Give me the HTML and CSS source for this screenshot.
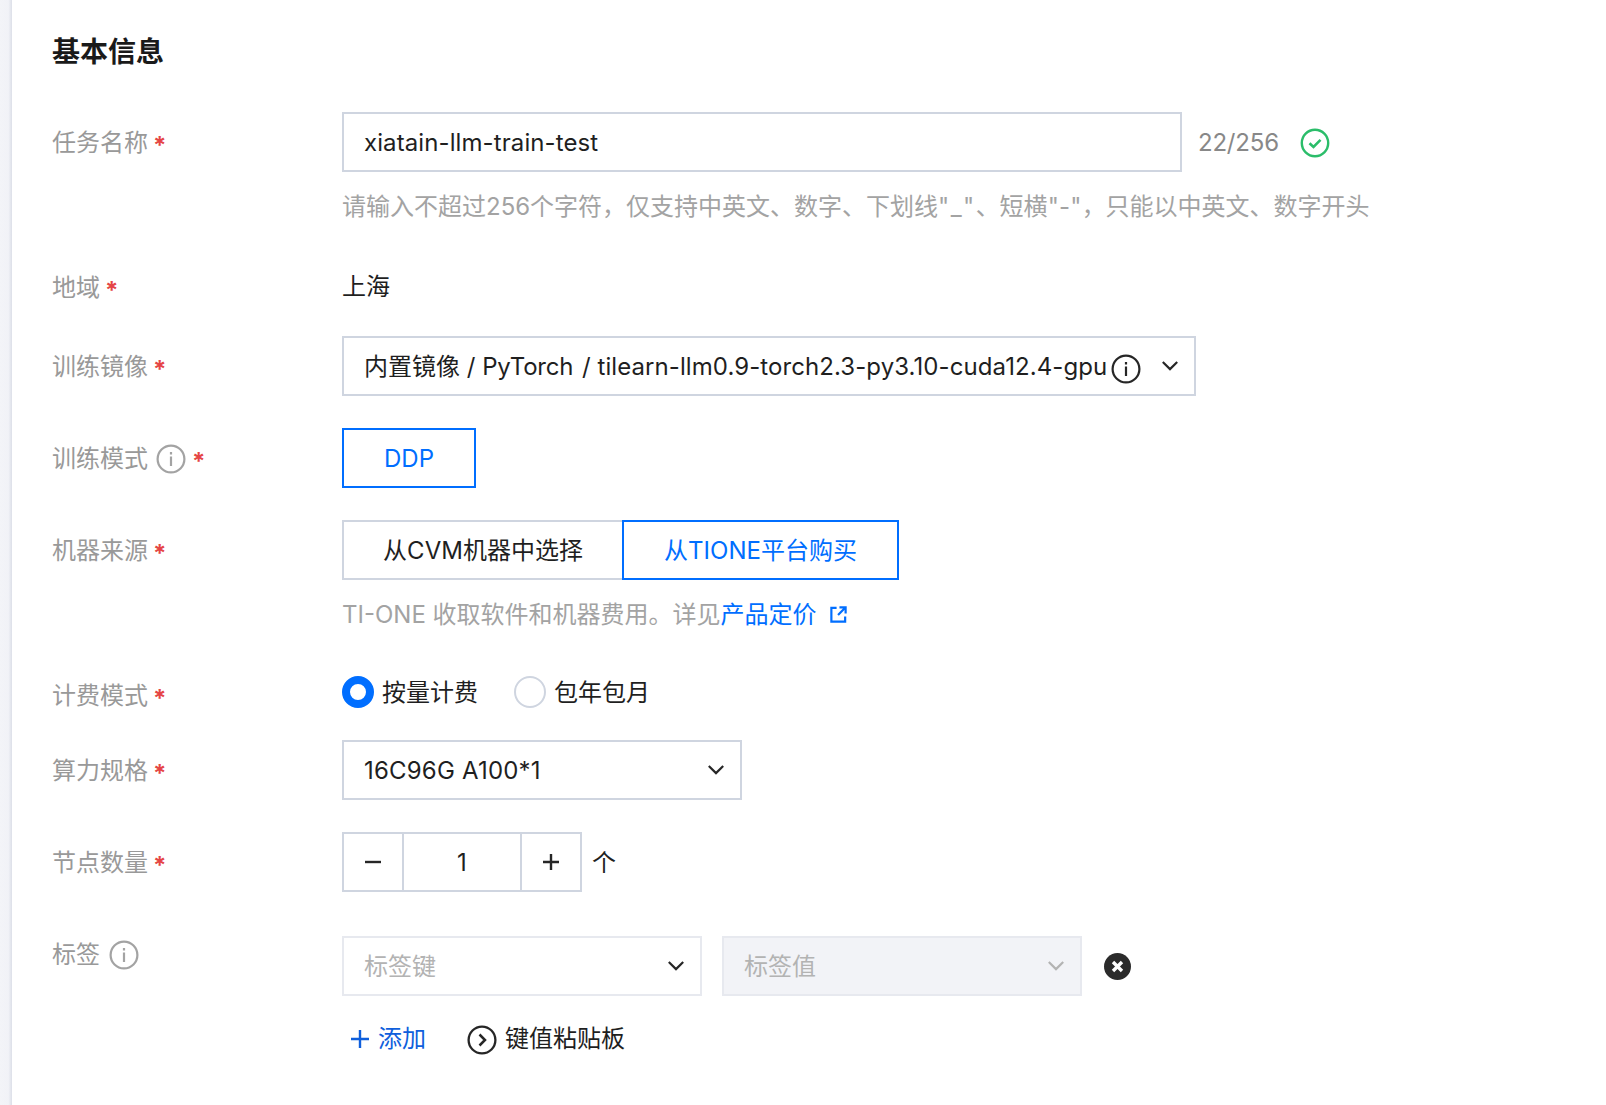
FILE: index.html
```html
<!DOCTYPE html>
<html lang="zh">
<head>
<meta charset="utf-8">
<title>基本信息</title>
<link rel="stylesheet" href="styles.css">
</head>
<body>
<div class="edge"></div>
<main class="panel">
  <h2 class="title">基本信息</h2>

  <div class="row row-name">
    <div class="label">任务名称<span class="req">*</span></div>
    <div class="ctrl">
      <div class="line">
        <div class="box box-name">xiatain-llm-train-test</div>
        <span class="count">22/256</span>
        <svg class="ok" viewBox="0 0 30 30"><circle cx="15" cy="15" r="13.2" fill="none" stroke="#2bbd6a" stroke-width="2.4"/><path d="M9.5 15.2l4 3.8 7-7.2" fill="none" stroke="#2bbd6a" stroke-width="2.6"/></svg>
      </div>
      <p class="hint">请输入不超过256个字符，仅支持中英文、数字、下划线<span class="q1">"_"</span>、短横<span class="q2">"-"</span>，只能以中英文、数字开头</p>
    </div>
  </div>

  <div class="row row-region">
    <div class="label label-plain">地域<span class="req">*</span></div>
    <div class="ctrl plain">上海</div>
  </div>

  <div class="row row-image">
    <div class="label">训练镜像<span class="req">*</span></div>
    <div class="ctrl">
      <div class="box box-image">
        <span>内置镜像 / <span class="torch">PyTorch</span> <span class="slash">/</span> <span class="tail">tilearn-llm0.9-torch2.3-py3.10-cuda12.4-gpu</span></span>
        <svg class="info info-dark" viewBox="0 0 30 30"><circle cx="15" cy="15" r="13.4" fill="none" stroke="currentColor" stroke-width="2.2"/><path d="M15 12.5v9.5M15 8v2.6" fill="none" stroke="currentColor" stroke-width="2.2"/></svg>
        <svg class="chev" viewBox="0 0 20 12"><path d="M2 2l8 8 8-8" fill="none" stroke="currentColor" stroke-width="2.4"/></svg>
      </div>
    </div>
  </div>

  <div class="row row-tight">
    <div class="label">训练模式<svg class="info info-grey" viewBox="0 0 30 30"><circle cx="15" cy="15" r="13.4" fill="none" stroke="currentColor" stroke-width="2.2"/><path d="M15 12.5v9.5M15 8v2.6" fill="none" stroke="currentColor" stroke-width="2.2"/></svg><span class="req req-mode">*</span></div>
    <div class="ctrl"><div class="seg seg-on seg-ddp">DDP</div></div>
  </div>

  <div class="row row-tight">
    <div class="label">机器来源<span class="req">*</span></div>
    <div class="ctrl">
      <div class="segs">
        <div class="seg seg-cvm">从CVM机器中选择</div>
        <div class="seg seg-on seg-tione">从TIONE平台购买</div>
      </div>
      <p class="hint">TI-ONE 收取软件和机器费用。详见<a class="link">产品定价<svg class="ext" viewBox="0 0 20 20"><path d="M8 3H2.5v14.500h14.500V12M11 2.500h6.500V9M17 3l-7.500 7.500" fill="none" stroke="currentColor" stroke-width="2.300"/></svg></a></p>
    </div>
  </div>

  <div class="row row-bill">
    <div class="label label-low">计费模式<span class="req">*</span></div>
    <div class="ctrl radios">
      <span class="radio"><i class="dot dot-on"></i>按量计费</span>
      <span class="radio"><i class="dot"></i>包年包月</span>
    </div>
  </div>

  <div class="row row-spec">
    <div class="label">算力规格<span class="req">*</span></div>
    <div class="ctrl">
      <div class="box box-spec"><span>16C96G A100*1</span><svg class="chev" viewBox="0 0 20 12"><path d="M2 2l8 8 8-8" fill="none" stroke="currentColor" stroke-width="2.4"/></svg></div>
    </div>
  </div>

  <div class="row row-num">
    <div class="label">节点数量<span class="req">*</span></div>
    <div class="ctrl line">
      <div class="stepper">
        <span class="step"><svg class="op" viewBox="0 0 16 16"><path d="M0 8h16" stroke="currentColor" stroke-width="2.4"/></svg></span>
        <span class="val">1</span>
        <span class="step"><svg class="op" viewBox="0 0 16 16"><path d="M0 8h16M8 0v16" stroke="currentColor" stroke-width="2.4"/></svg></span>
      </div>
      <span class="unit">个</span>
    </div>
  </div>

  <div class="row row-tag">
    <div class="label label-tag">标签<svg class="info info-grey info-tag" viewBox="0 0 30 30"><circle cx="15" cy="15" r="13.4" fill="none" stroke="currentColor" stroke-width="2.2"/><path d="M15 12.5v9.5M15 8v2.6" fill="none" stroke="currentColor" stroke-width="2.2"/></svg></div>
    <div class="ctrl">
      <div class="line tag-line">
        <div class="box box-tag"><span>标签键</span><svg class="chev" viewBox="0 0 20 12"><path d="M2 2l8 8 8-8" fill="none" stroke="currentColor" stroke-width="2.4"/></svg></div>
        <div class="box box-tag box-off"><span>标签值</span><svg class="chev" viewBox="0 0 20 12"><path d="M2 2l8 8 8-8" fill="none" stroke="currentColor" stroke-width="2.4"/></svg></div>
        <svg class="close" viewBox="0 0 27 27"><circle cx="13.500" cy="13.500" r="13.500" fill="#2b2b2b"/><path d="M9 9l9 9M18 9l-9 9" stroke="#fff" stroke-width="3.400"/></svg>
      </div>
      <div class="actions">
        <a class="add"><svg class="plus" viewBox="0 0 18 18"><path d="M0 9h18M9 0v18" stroke="currentColor" stroke-width="2.4"/></svg>添加</a>
        <span class="paste"><svg class="go" viewBox="0 0 30 30"><circle cx="15" cy="15" r="13.4" fill="none" stroke="currentColor" stroke-width="2.300"/><path d="M12.500 9.500l5.500 5.500-5.500 5.500" fill="none" stroke="currentColor" stroke-width="2.500"/></svg>键值粘贴板</span>
      </div>
    </div>
  </div>
</main>
</body>
</html>
```
FILE: styles.css
```css
* { box-sizing: border-box; }
html, body { margin: 0; height: 100%; }
body {
  display: flex;
  background: #fff;
  color: #1f1f1f;
  font-family: Inter, "Noto Sans CJK SC", sans-serif;
  font-size: 24px;
  line-height: 36px;
  overflow: hidden;
}
.edge {
  flex: 0 0 12px;
  background: linear-gradient(90deg, #f3f4f8 0, #f1f2f7 70%, #dcdfe8 100%);
}
.panel { flex: 1; padding: 31px 0 0 40px; }
.title { margin: 0; font-size: 28px; line-height: 42px; font-weight: 700; color: #1a1a1a; }
.row { display: grid; grid-template-columns: 290px 1fr; }
.row-name { margin-top: 39px; }
.row-region { margin-top: 44px; }
.row-image { margin-top: 31px; }
.row-tight { margin-top: 32px; }
.row-bill { margin-top: 43px; }
.row-spec { margin-top: 26px; }
.row-num { margin-top: 32px; }
.row-tag { margin-top: 44px; }
.label { display: flex; align-items: center; height: 60px; padding-top: 2px; color: #999; }
.label-plain { height: 36px; }
.label-low { height: 38px; }
.label-tag { height: 36px; }
.req { margin-left: 5px; color: #e54545; font-size: 24px; font-weight: 700; line-height: 1; padding-top: 6px; }
.req-mode { margin-left: 6px; }
.ctrl { min-width: 0; }
.plain { color: #1f1f1f; }
.line { display: flex; align-items: center; }
.box {
  display: flex;
  align-items: center;
  height: 60px;
  padding: 2px 15px 0 20px;
  border: 2px solid #cfd5e0;
  background: #fff;
}
.box-name { width: 840px; letter-spacing: .1px; }
.count { margin-left: 16px; padding-top: 2px; color: #888; letter-spacing: -.2px; }
.ok { width: 30px; height: 30px; margin: 2px 0 0 21px; }
.hint { margin: 17px 0 0; color: #a3a3a3; white-space: nowrap; }
.q1 { letter-spacing: 1.4px; }
.q2 { letter-spacing: .2px; }
.box-image { width: 854px; }
.torch { letter-spacing: -.2px; }
.slash { margin-left: 2px; }
.tail { letter-spacing: .08px; }
.info { width: 30px; height: 30px; flex: none; }
.info-dark { margin: 4px 0 0 4px; color: #262626; }
.info-grey { margin-left: 8px; color: #a3a3a3; }
.info-tag { margin-left: 9px; }
.chev { width: 18px; height: 11px; flex: none; margin: 0 0 4px auto; color: #262626; }
.seg {
  display: flex;
  align-items: center;
  justify-content: center;
  height: 60px;
  padding-top: 2px;
  border: 2px solid #cfd5e0;
}
.seg-on { border-color: #006eff; color: #006eff; }
.seg-ddp { width: 134px; }
.segs { display: flex; }
.seg-cvm { width: 280px; border-right: 0; }
.seg-tione { width: 277px; }
.link { color: #006eff; }
.ext { width: 19px; height: 19px; margin-left: 12px; vertical-align: -1px; }
.radios { display: flex; gap: 36px; height: 32px; align-items: center; }
.radio { display: inline-flex; align-items: center; gap: 8px; padding-top: 2px; line-height: 36px; }
.dot { width: 32px; height: 32px; margin-top: -2px; border: 2px solid #cfd5e0; border-radius: 50%; background: #fff; }
.dot-on { border: 8px solid #006eff; }
.box-spec { width: 400px; letter-spacing: .2px; }
.stepper { display: flex; width: 240px; height: 60px; border: 2px solid #cfd5e0; }
.step { display: flex; align-items: center; justify-content: center; width: 58px; color: #262626; }
.val { display: flex; align-items: center; justify-content: center; flex: 1; padding-top: 2px; border: solid #cfd5e0; border-width: 0 2px; }
.op { width: 16px; height: 16px; }
.unit { margin-left: 10px; padding-top: 2px; }
.tag-line { gap: 20px; }
.box-tag { width: 360px; border-color: #e7e9ef; color: #b3b3b3; }
.box-tag .chev { color: #262626; }
.box-off { background: #f2f3f7; }
.box-off .chev { color: #b3b3b3; }
.close { width: 27px; height: 27px; margin-left: 2px; }
.actions { display: flex; align-items: center; margin-top: 25px; padding-left: 9px; }
.add { display: inline-flex; align-items: center; gap: 9px; color: #0f5fdc; }
.plus { width: 18px; height: 18px; }
.paste { display: inline-flex; align-items: center; gap: 8px; margin-left: 41px; }
.go { width: 30px; height: 30px; margin-top: 2px; color: #262626; }
```
